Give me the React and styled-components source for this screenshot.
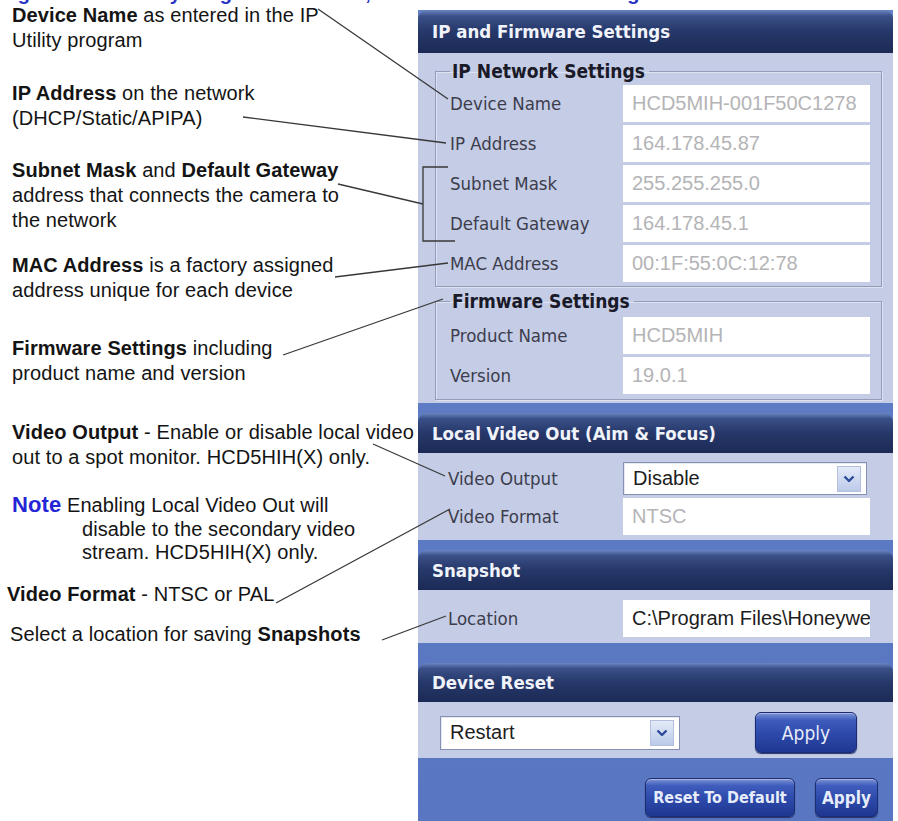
import React from "react";
import styled, { createGlobalStyle } from "styled-components";

const GlobalStyle = createGlobalStyle`
  html, body {
    margin: 0;
    padding: 0;
    background: #fff;
  }
`;

const Page = styled.div`
  position: relative;
  width: 898px;
  height: 821px;
  overflow: hidden;
  background: #fff;
  font-family: "Liberation Sans", Arial, sans-serif;
`;

// caption line of the page above, mostly cut off at the top
const Caption = styled.div`
  height: 4px;
  overflow: hidden;
  white-space: nowrap;
  color: #2a34c4;
  font: bold 20px/20px "Liberation Sans", Arial, sans-serif;

  span {
    display: block;
    margin-top: -17px;
  }
`;

const Columns = styled.div`
  display: grid;
  grid-template-columns: 418px 475px;
  align-items: start;
`;

/* ---------- callout notes on the left ---------- */

const Notes = styled.div`
  display: flex;
  flex-direction: column;
  padding-left: 12px;
  margin-top: -1px;
`;

const Note = styled.p`
  margin: ${(p) => p.$gap || 0}px 0 0 ${(p) => p.$shift || 0}px;
  font-size: 20px;
  line-height: ${(p) => p.$lh || 25}px;
  letter-spacing: 0.1px;
  color: #141414;
  white-space: nowrap;

  b {
    font-weight: bold;
  }
`;

const NoteTag = styled.span`
  color: #2525d6;
  font-weight: bold;
  font-size: 22px;
`;

const Indent = styled.span`
  display: block;
  padding-left: 70px;
`;

/* ---------- settings panel on the right ---------- */

const Panel = styled.div`
  margin-top: 6px;
  min-height: 815px;
  display: flex;
  flex-direction: column;
  background: linear-gradient(180deg, #6482c8, #5876c1);
  font-family: "DejaVu Sans Condensed", "DejaVu Sans", sans-serif;
`;

const SectionHead = styled.div`
  margin-top: ${(p) => p.$gap}px;
  height: ${(p) => p.$h}px;
  display: flex;
  align-items: center;
  padding-left: 14px;
  border-radius: 9px 9px 0 0;
  background: linear-gradient(
    180deg,
    #6c86c2 0%,
    #3a5088 14%,
    #26386a 50%,
    #1c2a55 100%
  );
  color: #f1f3fa;
  font-weight: bold;
  font-size: 18.5px;
`;

const SectionBody = styled.div`
  background: #c4cce6;
  padding: ${(p) => p.$pad};
  display: flex;
  flex-direction: ${(p) => (p.$row ? "row" : "column")};
  align-items: ${(p) => (p.$row ? "center" : "stretch")};
  gap: ${(p) => p.$gap || 0}px;
`;

const Group = styled.fieldset`
  margin: ${(p) => p.$top}px 11px 0 17px;
  padding: ${(p) => p.$padTop}px 11px ${(p) => p.$padBottom}px 14px;
  min-width: 0;
  border: 1px solid #939cb9;
  box-shadow: inset 1px 1px 0 #dde2f2, 1px 1px 0 #dde2f2;
  display: flex;
  flex-direction: column;
  gap: 3px;
`;

const Legend = styled.legend`
  padding: 0 4px 0 2px;
  font-weight: bold;
  font-size: 19px;
  line-height: 20px;
  color: #1a1a28;
`;

const Row = styled.div`
  display: grid;
  grid-template-columns: ${(p) => p.$label || 173}px ${(p) => p.$field || 247}px;
  align-items: center;
  height: ${(p) => p.$h || 37}px;
`;

const Label = styled.span`
  font-size: 18.5px;
  color: #3c3d4c;
  white-space: nowrap;
`;

const Field = styled.div`
  height: 100%;
  box-sizing: border-box;
  display: flex;
  align-items: center;
  padding-left: 9px;
  background: #fff;
  color: ${(p) => (p.$muted ? "#b4b4b6" : "#1d1d1d")};
  font: 20px "Liberation Sans", Arial, sans-serif;
  white-space: nowrap;
  overflow: hidden;
`;

const Select = styled(Field)`
  width: ${(p) => p.$w || "auto"};
  height: ${(p) => p.$h || 34}px;
  justify-content: space-between;
  padding-right: 5px;
  border: 1px solid #8591b2;
  box-shadow: inset 1px 1px 0 #e6e9f2;
`;

const ArrowBox = styled.span`
  width: 22px;
  height: 24px;
  display: flex;
  align-items: center;
  justify-content: center;
  border: 1px solid #b3bfdc;
  background: linear-gradient(180deg, #e4eaf7, #bccaea);
`;

const Button = styled.button`
  box-sizing: border-box;
  width: ${(p) => p.$w}px;
  height: ${(p) => p.$h}px;
  margin-left: ${(p) => p.$ml || 0}px;
  padding: 0;
  border: 1px solid #1b2c72;
  border-radius: 6px;
  background: linear-gradient(
    180deg,
    #7d94d6 0%,
    #3f5dbd 18%,
    #2c49aa 55%,
    #1f3790 100%
  );
  box-shadow: inset 0 1px 0 rgba(255, 255, 255, 0.35), 0 1px 1px #26336a;
  color: #e7ecfa;
  font-family: "DejaVu Sans Condensed", "DejaVu Sans", sans-serif;
  font-size: ${(p) => p.$fs || 17}px;
  font-weight: ${(p) => (p.$bold ? "bold" : "normal")};
  cursor: pointer;
`;

const Footer = styled.div`
  display: flex;
  justify-content: flex-end;
  padding: 20px 15px 0 0;
`;

const Leaders = styled.svg`
  position: absolute;
  top: 0;
  left: 0;
  pointer-events: none;
`;

const Chevron = () => (
  <svg width="12" height="8" viewBox="0 0 12 8">
    <polyline
      points="1.5,1.5 6,6 10.5,1.5"
      fill="none"
      stroke="#2b4c98"
      strokeWidth="2.4"
      strokeLinejoin="round"
    />
  </svg>
);

const ipRows = [
  ["Device Name", "HCD5MIH-001F50C1278"],
  ["IP Address", "164.178.45.87"],
  ["Subnet Mask", "255.255.255.0"],
  ["Default Gateway", "164.178.45.1"],
  ["MAC Address", "00:1F:55:0C:12:78"],
];

const firmwareRows = [
  ["Product Name", "HCD5MIH"],
  ["Version", "19.0.1"],
];

const leaderLines = [
  [318, 9, 448, 99],
  [243, 117, 446, 143],
  [338, 184, 423, 204],
  [335, 277, 448, 263],
  [283, 355, 443, 299],
  [373, 444, 445, 476],
  [276, 603, 450, 509],
  [382, 640, 446, 616],
];

export default function App() {
  return (
    <Page>
      <GlobalStyle />
      <Caption>
        <span>Figure 3-4 IP Utility Program - Network, Firmware and Video Settings</span>
      </Caption>

      <Columns>
        <Notes>
          <Note>
            <b>Device Name</b> as entered in the IP
            <br />
            Utility program
          </Note>
          <Note $gap={28}>
            <b>IP Address</b> on the network
            <br />
            (DHCP/Static/APIPA)
          </Note>
          <Note $gap={27}>
            <b>Subnet Mask</b> and <b>Default Gateway</b>
            <br />
            address that connects the camera to
            <br />
            the network
          </Note>
          <Note $gap={20}>
            <b>MAC Address</b> is a factory assigned
            <br />
            address unique for each device
          </Note>
          <Note $gap={33}>
            <b>Firmware Settings</b> including
            <br />
            product name and version
          </Note>
          <Note $gap={34}>
            <b>Video Output</b> - Enable or disable local video
            <br />
            out to a spot monitor. HCD5HIH(X) only.
          </Note>
          <Note $gap={23} $lh={23.5}>
            <NoteTag>Note</NoteTag> Enabling Local Video Out will
            <Indent>
              disable to the secondary video
              <br />
              stream. HCD5HIH(X) only.
            </Indent>
          </Note>
          <Note $gap={17} $shift={-5}>
            <b>Video Format</b> - NTSC or PAL
          </Note>
          <Note $gap={15} $shift={-2}>
            Select a location for saving <b>Snapshots</b>
          </Note>
        </Notes>

        <Panel>
          <SectionHead $gap={0} $h={43}>
            IP and Firmware Settings
          </SectionHead>
          <SectionBody $pad="8px 0 3px">
            <Group $top={0} $padTop={4} $padBottom={4}>
              <Legend>IP Network Settings</Legend>
              {ipRows.map(([label, value]) => (
                <Row key={label}>
                  <Label>{label}</Label>
                  <Field $muted>{value}</Field>
                </Row>
              ))}
            </Group>
            <Group $top={4} $padTop={6} $padBottom={5}>
              <Legend>Firmware Settings</Legend>
              {firmwareRows.map(([label, value]) => (
                <Row key={label}>
                  <Label>{label}</Label>
                  <Field $muted>{value}</Field>
                </Row>
              ))}
            </Group>
          </SectionBody>

          <SectionHead $gap={10} $h={40}>
            Local Video Out (Aim &amp; Focus)
          </SectionHead>
          <SectionBody $pad="9px 0 5px 30px" $gap={3}>
            <Row $label={175} $field={244} $h={33}>
              <Label>Video Output</Label>
              <Select $h={33}>
                Disable
                <ArrowBox>
                  <Chevron />
                </ArrowBox>
              </Select>
            </Row>
            <Row $label={175}>
              <Label>Video Format</Label>
              <Field $muted>NTSC</Field>
            </Row>
          </SectionBody>

          <SectionHead $gap={10} $h={40}>
            Snapshot
          </SectionHead>
          <SectionBody $pad="10px 0 6px 30px">
            <Row $label={175}>
              <Label>Location</Label>
              <Field>C:\Program Files\Honeywell\IP Utility\Snapshots</Field>
            </Row>
          </SectionBody>

          <SectionHead $gap={20} $h={39}>
            Device Reset
          </SectionHead>
          <SectionBody $pad="10px 36px 5px 22px" $row>
            <Select $w="240px" $h={34}>
              Restart
              <ArrowBox>
                <Chevron />
              </ArrowBox>
            </Select>
            <Button $w={102} $h={41} $ml={75} $fs={19}>
              Apply
            </Button>
          </SectionBody>

          <Footer>
            <Button $w={150} $h={39} $fs={16} $bold>
              Reset To Default
            </Button>
            <Button $w={63} $h={39} $ml={20} $fs={17} $bold>
              Apply
            </Button>
          </Footer>
        </Panel>
      </Columns>

      <Leaders width="898" height="821">
        <g stroke="#383838" strokeWidth="1.3" fill="none">
          {leaderLines.map(([x1, y1, x2, y2], i) => (
            <line key={i} x1={x1} y1={y1} x2={x2} y2={y2} />
          ))}
          <path d="M448 167 H423 V241 H455" />
        </g>
      </Leaders>
    </Page>
  );
}
